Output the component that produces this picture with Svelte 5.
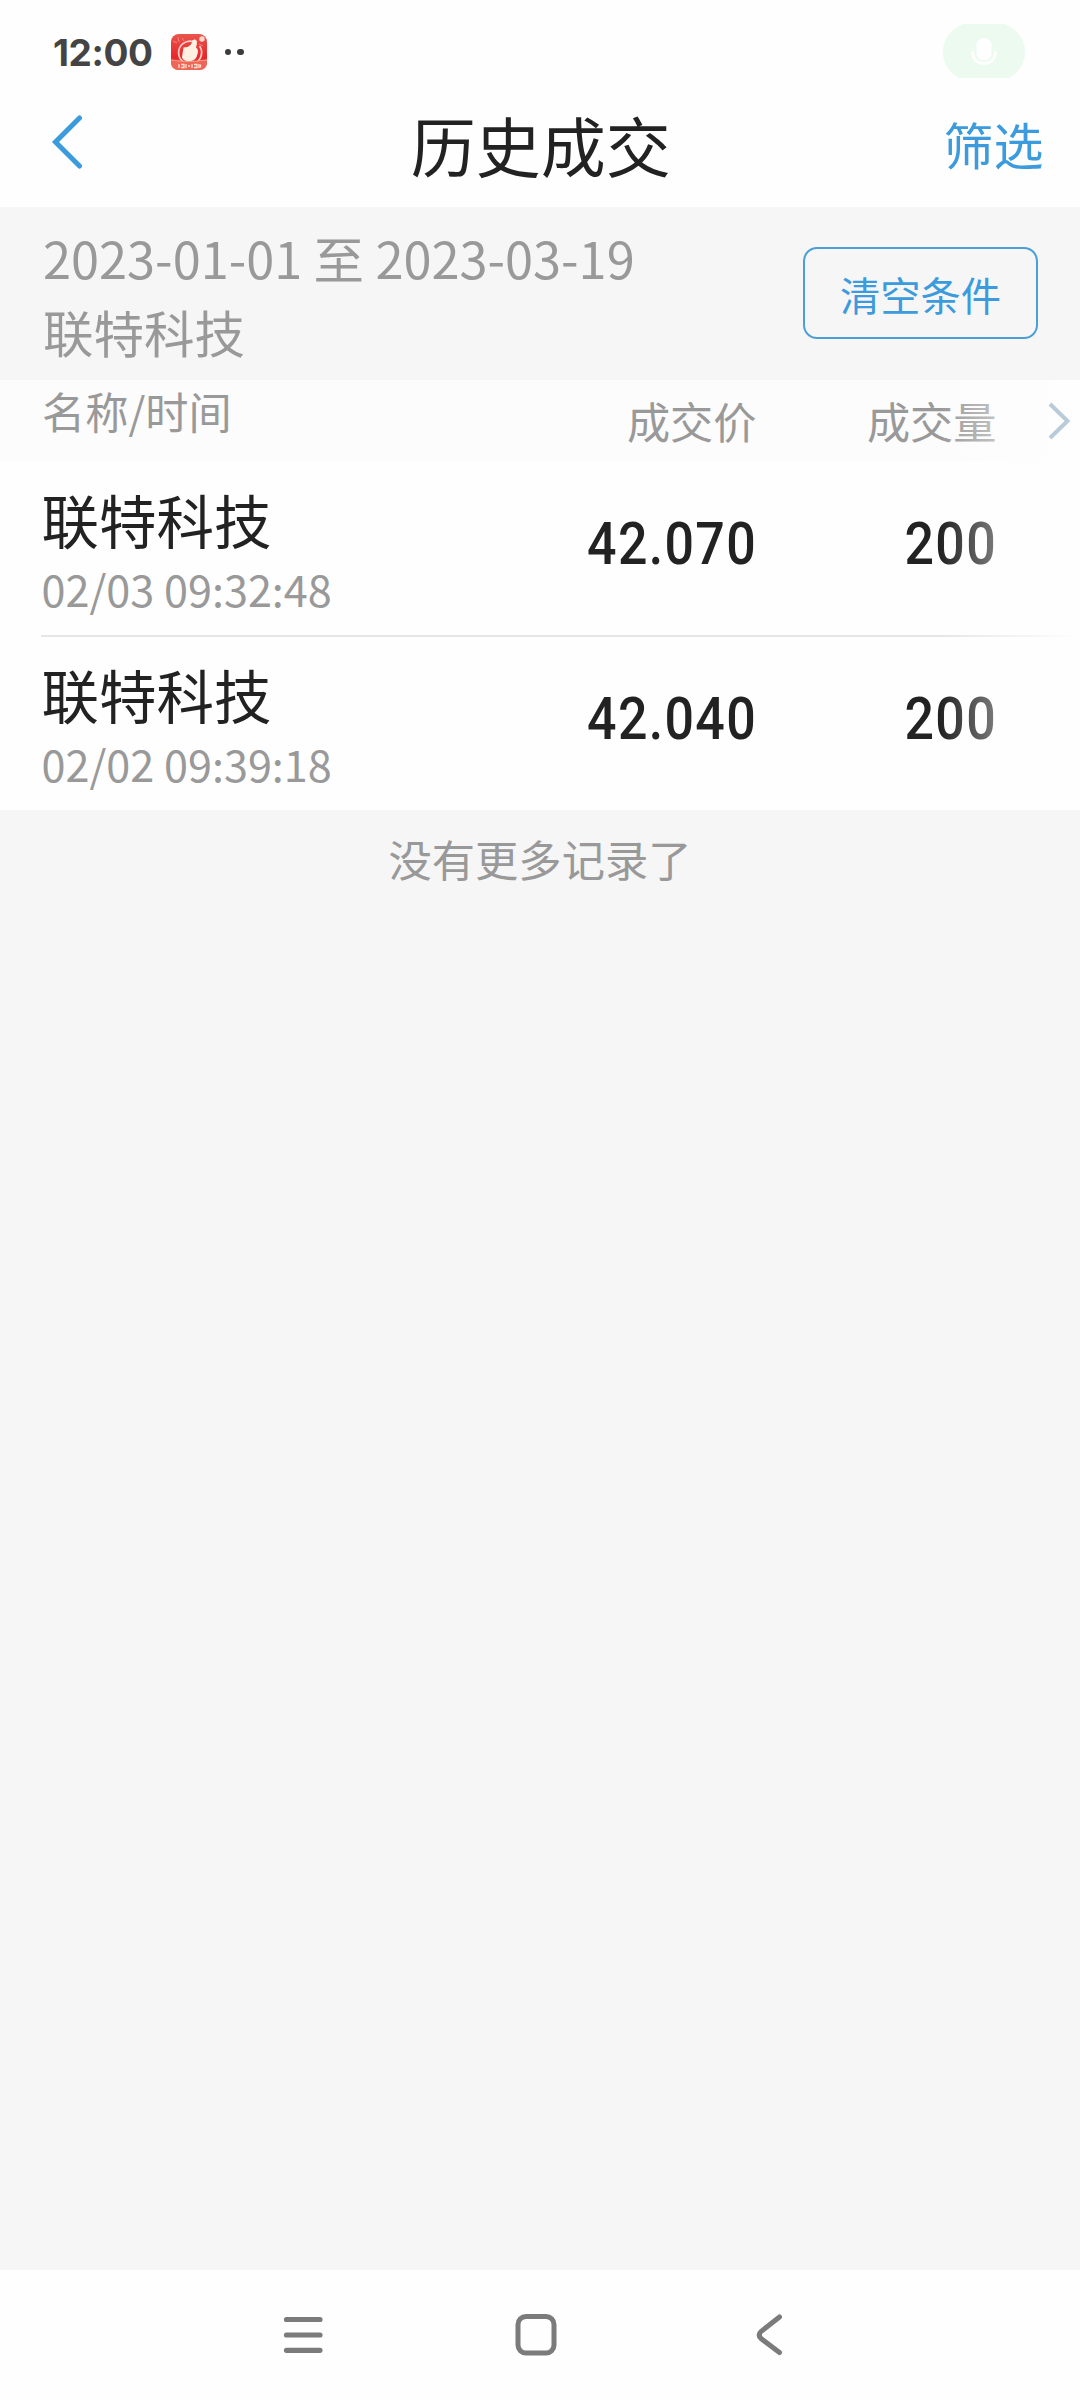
<script>
  const trades = [
    { name: '联特科技', time: '02/03 09:32:48', price: '42.070', volume: '200' },
    { name: '联特科技', time: '02/02 09:39:18', price: '42.040', volume: '200' }
  ];
</script>

<div class="screen">
  <div class="status">
    <span class="clock">12:00</span>
    <svg class="app-icon" width="38" height="38" viewBox="0 0 38 38" aria-hidden="true">
      <defs>
        <linearGradient id="app-bg" x1="0" y1="0" x2="0" y2="1">
          <stop offset="0" stop-color="#e9544b" />
          <stop offset="0.65" stop-color="#e8262b" />
          <stop offset="1" stop-color="#f0695a" />
        </linearGradient>
      </defs>
      <rect x="1" y="1" width="36" height="36" rx="8" fill="url(#app-bg)" />
      <path d="M3 8l4 2M8 4l1 5M12 5l2 3M29 11l4 2" stroke="#f2867c" stroke-width="1" fill="none" />
      <path d="M23 8.5A11.5 11.5 0 1 0 29.500 13" fill="none" stroke="#fbd0c6" stroke-width="1.7" />
      <path d="M1 26.500Q10 28 14 28.300H24Q29 28 37 26.500V29Q37 37 29 37H9Q1 37 1 29Z" fill="#ef6656" />
      <path d="M1 27Q11 28.500 19 28.500T37 27" fill="none" stroke="#f7a08e" stroke-width="1" />
      <path d="M13.500 14.500Q18 14.500 20.500 12Q22 10 22.200 7.500Q25 5.300 26.800 8Q27.400 11 26 14.500Q29 17 27.500 21Q26.500 27 21 28H17Q12.500 27.500 12 24Z" fill="#fff0e2" />
      <circle cx="32" cy="6" r="2.700" fill="#ffd9cb" />
      <path d="M9 31v4M11 31.500h3v3h-3M16 31v4M18 33h2M22 31v4M24 31.500h3v3h-3M29 31v4M30.500 31.500v3" stroke="#fde0cf" stroke-width="1.300" fill="none" />
    </svg>
    <span class="dots"><i></i><i></i></span>
    <svg class="mic" width="82" height="56" viewBox="0 0 82 56" aria-hidden="true">
      <path d="M20 0H62Q82 9 82 28T62 56H20Q0 47 0 28T20 0Z" fill="#ecfaf0" />
      <rect x="33.500" y="14" width="15" height="22.500" rx="7.500" fill="#fff" />
      <path d="M29.500 27.500C29.500 43.500 52.500 43.500 52.500 27.500" fill="none" stroke="#fff" stroke-width="2.800" />
    </svg>
  </div>

  <header class="nav">
    <svg class="back" width="34" height="56" viewBox="0 0 34 56" aria-hidden="true">
      <path d="M29.500 3L5.500 27L29.500 51" fill="none" stroke="#3c9bdc" stroke-width="5" stroke-linecap="round" />
    </svg>
    <h1>历史成交</h1>
    <span class="filter">筛选</span>
  </header>

  <section class="criteria">
    <div class="criteria-text">
      <div>2023-01-01 至 2023-03-19</div>
      <div>联特科技</div>
    </div>
    <button>清空条件</button>
  </section>

  <div class="table">
    <div class="head">
      <span class="col-name">名称/时间</span>
      <span class="col-num">成交价</span>
      <span class="col-num">成交量</span>
    </div>
    {#each trades as trade}
      <div class="row">
        <div class="col-name">
          <div class="stock">{trade.name}</div>
          <div class="time">{trade.time}</div>
        </div>
        <span class="col-num num">{trade.price}</span>
        <span class="col-num num">{trade.volume}</span>
      </div>
    {/each}
    <div class="fade"></div>
    <svg class="more" width="24" height="40" viewBox="0 0 24 40" aria-hidden="true">
      <path d="M2 3L19.500 20L2 37" fill="none" stroke="#b9cad8" stroke-width="4" />
    </svg>
  </div>

  <p class="end">没有更多记录了</p>

  <footer class="system">
    <svg width="40" height="42" viewBox="0 0 40 42" aria-hidden="true">
      <path d="M3.500 5.500H37M3.500 21H37M3.500 36.300H37" stroke="#7b7b7b" stroke-width="5.200" stroke-linecap="round" />
    </svg>
    <svg class="home" width="42" height="42" viewBox="0 0 42 42" aria-hidden="true">
      <rect x="3" y="2.500" width="36" height="36.500" rx="8" fill="none" stroke="#7b7b7b" stroke-width="5" />
    </svg>
    <svg width="28" height="42" viewBox="0 0 28 42" aria-hidden="true">
      <path d="M23.500 3L5 17.500Q1.500 21 5 24.500L23.500 38.500" fill="none" stroke="#7b7b7b" stroke-width="5" stroke-linecap="round" />
    </svg>
  </footer>
</div>

<style>
  :global(body) {
    background: #f6f6f6;
  }
  .screen {
    width: 1080px;
    height: 2400px;
    display: flex;
    flex-direction: column;
    background: #f6f6f6;
    color: #222;
    font-family: 'Noto Sans CJK SC', sans-serif;
    overflow: hidden;
  }
  .screen :global(svg) {
    display: block;
    flex: none;
  }
  .status {
    height: 78px;
    flex: none;
    box-sizing: border-box;
    padding: 24px 55px 0 53px;
    display: flex;
    align-items: flex-start;
    background: #fefefe;
  }
  .clock {
    width: 117px;
    font: 700 37px/58px Inter, sans-serif;
    letter-spacing: -0.4px;
    color: #444;
    white-space: nowrap;
  }
  .app-icon {
    margin-top: 9px;
  }
  .dots {
    display: flex;
    gap: 6px;
    margin: 25px 0 0 17px;
  }
  .dots i {
    width: 6.4px;
    height: 6.4px;
    border-radius: 50%;
    background: #3c3c3c;
  }
  .mic {
    margin-left: auto;
    overflow: visible;
  }
  .nav {
    height: 129px;
    flex: none;
    box-sizing: border-box;
    padding: 0 36.5px 0 50px;
    display: grid;
    grid-template-columns: 1fr auto 1fr;
    align-items: center;
    background: #fefefe;
  }
  .nav h1 {
    margin: 2px 0 0 -12px;
    font-size: 65px;
    font-weight: 400;
    line-height: 94px;
  }
  .filter {
    justify-self: end;
    font-size: 50px;
    line-height: 72px;
    color: #3c9bdc;
  }
  .criteria {
    height: 173px;
    flex: none;
    box-sizing: border-box;
    padding: 14px 42px 0 43px;
    display: flex;
    justify-content: space-between;
    align-items: flex-start;
  }
  .criteria-text {
    font-size: 50.5px;
    line-height: 73.6px;
    color: #999;
  }
  button {
    width: 235px;
    height: 92px;
    margin-top: 26px;
    padding: 2px 0 0;
    box-sizing: border-box;
    border: 2px solid #4b9fd6;
    border-radius: 14px;
    background: transparent;
    color: #3c9bdc;
    font-family: inherit;
    font-size: 40.3px;
    line-height: 86px;
  }
  .table {
    position: relative;
    background: #fefefe;
    flex: none;
  }
  .head {
    height: 82px;
    box-sizing: border-box;
    padding: 0 83.5px 0 42px;
    display: flex;
    align-items: flex-start;
    background: #fcfcfc;
    color: #999;
    font-size: 43.2px;
    line-height: 81px;
  }
  .head .col-name {
    line-height: 60px;
  }
  .col-name {
    flex: 1;
  }
  .col-num {
    width: 240px;
    text-align: right;
  }
  .row {
    height: 173px;
    box-sizing: border-box;
    margin-left: 41px;
    padding: 17px 83px 0 0.5px;
    display: flex;
    align-items: flex-start;
  }
  .row + .row {
    height: 175px;
    border-top: 2px solid #e6e6e6;
  }
  .stock {
    font-size: 57.5px;
    line-height: 80px;
  }
  .time {
    font-size: 43.2px;
    line-height: 59px;
    color: #999;
  }
  .num {
    padding-top: 25px;
    font-family: Roboto, sans-serif;
    font-weight: 500;
    font-size: 59px;
    line-height: 80px;
    letter-spacing: 1.5px;
    transform: scaleX(0.88);
    transform-origin: 100% 50%;
  }
  .fade {
    position: absolute;
    inset: 0 0 0 auto;
    width: 140px;
    background: linear-gradient(to right, rgba(254, 254, 254, 0), #fefefe);
  }
  .more {
    position: absolute;
    top: 21px;
    right: 8px;
  }
  .end {
    margin: 0;
    padding-top: 17px;
    text-align: center;
    color: #999;
    font-size: 43.3px;
    line-height: 62px;
  }
  .system {
    height: 130px;
    flex: none;
    box-sizing: border-box;
    margin-top: auto;
    padding: 0 296px 0 283px;
    display: flex;
    align-items: center;
    justify-content: space-between;
    background: #fefefe;
  }
  .home {
    margin-right: 7px;
  }
</style>
